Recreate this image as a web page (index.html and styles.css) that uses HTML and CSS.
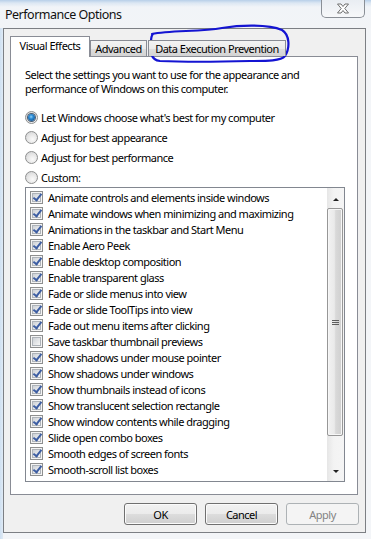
FILE: index.html
```html
<!DOCTYPE html>
<html lang="en">
<head>
  <meta charset="UTF-8" />
  <title>Performance Options</title>
  <link rel="stylesheet" href="styles.css">
</head>
<body>
  <div class="window">
    <div class="titlebar">
      <div class="title">Performance Options</div>
      <div class="close">
        <svg width="14" height="11" viewBox="0 0 14 11">
          <path d="M1.5 1 L5 1 L7 3.5 L9 1 L12.5 1 L8.8 5.5 L12.5 10 L9 10 L7 7.5 L5 10 L1.5 10 L5.2 5.5 Z" fill="#fff" stroke="#6f6f6f" stroke-width="1" stroke-linejoin="round"/>
        </svg>
      </div>
    </div>

    <div class="client">
      <div class="tabs">
        <div class="tab selected">Visual Effects</div>
        <div class="tab tab-adv">Advanced</div>
        <div class="tab tab-dep">Data Execution Prevention</div>
      </div>

      <div class="panel">
        <p class="intro">Select the settings you want to use for the appearance and<br>performance of Windows on this computer.</p>

        <div class="radios">
          <div class="radio-row"><span class="radio on"></span>Let Windows choose what's best for my computer</div>
          <div class="radio-row"><span class="radio"></span>Adjust for best appearance</div>
          <div class="radio-row"><span class="radio"></span>Adjust for best performance</div>
          <div class="radio-row"><span class="radio"></span>Custom:</div>
        </div>

        <div class="listbox">
          <div class="items">
            <div class="item"><span class="check on"></span>Animate controls and elements inside windows</div>
            <div class="item"><span class="check on"></span>Animate windows when minimizing and maximizing</div>
            <div class="item"><span class="check on"></span>Animations in the taskbar and Start Menu</div>
            <div class="item"><span class="check on"></span>Enable Aero Peek</div>
            <div class="item"><span class="check on"></span>Enable desktop composition</div>
            <div class="item"><span class="check on"></span>Enable transparent glass</div>
            <div class="item"><span class="check on"></span>Fade or slide menus into view</div>
            <div class="item"><span class="check on"></span>Fade or slide ToolTips into view</div>
            <div class="item"><span class="check on"></span>Fade out menu items after clicking</div>
            <div class="item"><span class="check"></span>Save taskbar thumbnail previews</div>
            <div class="item"><span class="check on"></span>Show shadows under mouse pointer</div>
            <div class="item"><span class="check on"></span>Show shadows under windows</div>
            <div class="item"><span class="check on"></span>Show thumbnails instead of icons</div>
            <div class="item"><span class="check on"></span>Show translucent selection rectangle</div>
            <div class="item"><span class="check on"></span>Show window contents while dragging</div>
            <div class="item"><span class="check on"></span>Slide open combo boxes</div>
            <div class="item"><span class="check on"></span>Smooth edges of screen fonts</div>
            <div class="item"><span class="check on"></span>Smooth-scroll list boxes</div>
          </div>
          <div class="scrollbar">
            <div class="arrow up"><span class="tri-up"></span></div>
            <div class="track">
              <div class="thumb"><span class="grip"></span></div>
            </div>
            <div class="arrow down"><span class="tri-down"></span></div>
          </div>
        </div>
      </div>

      <div class="buttons">
        <button class="btn">OK</button>
        <button class="btn">Cancel</button>
        <button class="btn" disabled>Apply</button>
      </div>
    </div>

    <svg class="scribble" width="371" height="80" viewBox="0 0 371 80">
      <path d="M152 34 C170 30 200 32 222 28 C240 25 268 24 282 30 C290 35 290 48 285 56 C281 61 268 61 250 61 C212 62 182 62 160 61 C150 60 150 50 151 42 C151 38 151 36 153 34" fill="none" stroke="#1414d2" stroke-width="2.2" stroke-linecap="round"/>
    </svg>
  </div>
</body>
</html>
```

FILE: styles.css
```css
body {
  margin: 0;
  padding: 0;
  font-family: 'Noto Sans', 'Open Sans', sans-serif;
  font-size: 11px;
  letter-spacing: -0.5px;
  color: #000;
  background: #f4f6f9;
}

.window {
  position: relative;
  width: 371px;
  height: 539px;
  background: linear-gradient(to right, #cfe0f1 0, #dfeaf5 3px, #f3f5f8 3px);
  overflow: hidden;
}

.titlebar {
  height: 28px;
  display: flex;
  justify-content: space-between;
  align-items: flex-start;
  background: linear-gradient(to bottom, #b7cfe9 0, #dce7f3 3px, #f1f4f8 7px, #f2f4f7 100%);
}

.title {
  padding: 6px 0 0 5px;
  font-size: 12.5px;
  letter-spacing: -0.5px;
  color: #111;
}

.close {
  width: 44px;
  height: 18px;
  margin-right: 6px;
  border: 1px solid #8a8f96;
  border-top: none;
  border-radius: 0 0 5px 5px;
  background: linear-gradient(to bottom, #e9edf2, #f7f8fa);
  display: flex;
  align-items: center;
  justify-content: center;
  box-sizing: border-box;
}

.client {
  margin-left: 3px;
  width: 363px;
  height: 505px;
  box-sizing: border-box;
  border: 1px solid #7c7f84;
  background: #f0f0f0;
  padding-top: 7px;
}

.tabs {
  display: flex;
  align-items: flex-end;
  height: 21px;
  margin-left: 6px;
  margin-bottom: -1px;
  position: relative;
  z-index: 1;
}

.tab {
  box-sizing: border-box;
  height: 16px;
  margin-bottom: 1px;
  border: 1px solid #898c95;
  border-bottom: none;
  background: linear-gradient(to bottom, #f3f3f3 0%, #ebebeb 50%, #dedede 51%, #d3d3d3 100%);
  text-align: center;
  line-height: 15px;
  white-space: nowrap;
}

.tab.selected {
  width: 80px;
  height: 21px;
  margin-bottom: 0;
  background: #fff;
  line-height: 18px;
}

.tab-adv {
  width: 57px;
}

.tab-dep {
  width: 138px;
  margin-left: 1px;
}

.panel {
  width: 348px;
  height: 439px;
  margin-left: 6px;
  box-sizing: border-box;
  border: 1px solid #898c95;
  background: #fff;
  padding: 11px 0 0 14px;
}

.intro {
  margin: 0;
  line-height: 14px;
}

.radios {
  margin-top: 11px;
}

.radio-row {
  height: 20px;
  display: flex;
  align-items: center;
}

.radio {
  width: 13px;
  height: 13px;
  box-sizing: border-box;
  border-radius: 50%;
  border: 1px solid #8e8f8f;
  background: radial-gradient(circle at 60% 65%, #fafafa 0, #e4e4e4 55%, #c9cbcf 100%);
  margin-right: 3px;
  display: flex;
  align-items: center;
  justify-content: center;
  flex: none;
}

.radio.on::after {
  content: '';
  width: 7px;
  height: 7px;
  border-radius: 50%;
  background: radial-gradient(circle at 45% 40%, #8fd0f7 0, #2a8ad4 35%, #0d3d75 100%);
  box-shadow: 0 0 0 1px #4a5c70;
}

.listbox {
  width: 320px;
  height: 295px;
  box-sizing: border-box;
  border: 1px solid #828790;
  display: flex;
}

.items {
  flex: 1;
  padding: 1px 0 0 4px;
}

.item {
  height: 16px;
  display: flex;
  align-items: center;
  white-space: nowrap;
}

.check {
  position: relative;
  width: 13px;
  height: 13px;
  box-sizing: border-box;
  border: 1px solid #8e8f8f;
  background: #f4f4f4;
  margin-right: 5px;
  flex: none;
}

.check::before {
  content: '';
  position: absolute;
  left: 1px;
  top: 1px;
  width: 9px;
  height: 9px;
  box-sizing: border-box;
  border: 1px solid #aeb3b9;
  background: linear-gradient(135deg, #cdd1d6, #f7f7f7);
}

.check.on::after {
  content: '';
  position: absolute;
  left: 4px;
  top: 0;
  width: 3px;
  height: 7px;
  border: solid #3d5ea3;
  border-width: 0 2px 2px 0;
  transform: rotate(38deg);
}

.scrollbar {
  width: 17px;
  display: flex;
  flex-direction: column;
  background: linear-gradient(to right, #e6e6e6, #f3f3f3 40%, #f5f5f5);
}

.arrow {
  height: 20px;
  display: flex;
  align-items: center;
  justify-content: center;
}

.arrow.up {
  padding-top: 2px;
  box-sizing: border-box;
}

.tri-up {
  border: 3px solid transparent;
  border-top: none;
  border-bottom: 3px solid #222;
}

.tri-down {
  border: 3px solid transparent;
  border-bottom: none;
  border-top: 3px solid #222;
}

.track {
  flex: 1;
}

.thumb {
  height: 228px;
  margin: 0 1px 0 0;
  box-sizing: border-box;
  border: 1px solid #979797;
  border-radius: 2px;
  background: linear-gradient(to right, #f2f2f2 0%, #eaeaea 45%, #d9d9d9 55%, #cfcfcf 100%);
  box-shadow: inset 0 0 0 1px #f7f7f7;
  display: flex;
  align-items: center;
  justify-content: center;
}

.grip {
  width: 7px;
  height: 5px;
  background: repeating-linear-gradient(to bottom, #5e5e5e 0, #5e5e5e 1px, transparent 1px, transparent 2px);
}

.buttons {
  display: flex;
  justify-content: flex-end;
  gap: 8px;
  margin-top: 8px;
  padding-right: 6px;
}

.btn {
  width: 73px;
  height: 22px;
  font-family: inherit;
  font-size: 11px;
  letter-spacing: inherit;
  color: #000;
  border: 1px solid #707070;
  border-radius: 3px;
  background: linear-gradient(to bottom, #f2f2f2 0%, #ebebeb 50%, #dddddd 51%, #cfcfcf 100%);
  box-shadow: inset 0 0 0 1px #fbfbfb;
  padding: 0;
}

.btn:disabled {
  border-color: #adb2b5;
  background: #f4f4f4;
  box-shadow: none;
  color: #838383;
}

.scribble {
  position: absolute;
  left: 0;
  top: 0;
  pointer-events: none;
}
```
